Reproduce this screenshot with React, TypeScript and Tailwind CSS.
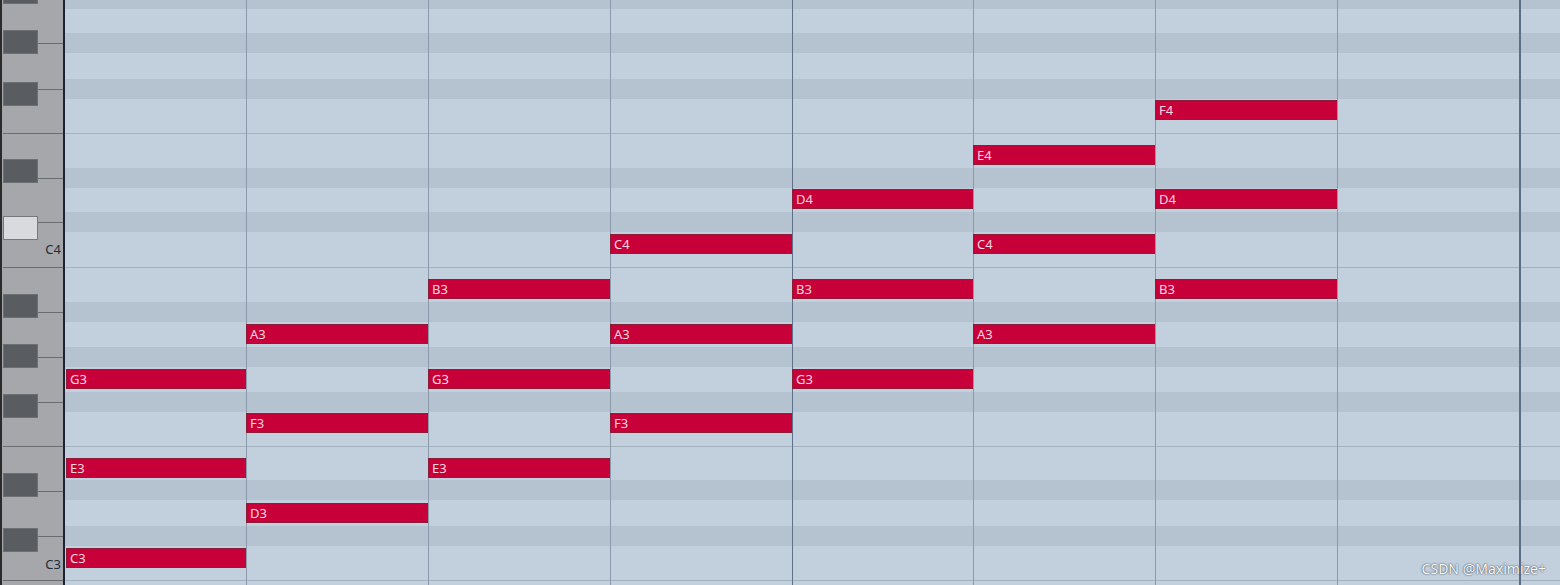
import React from "react";

const font = { fontFamily: '"Noto Sans", "Open Sans", sans-serif' };

// background rows, top to bottom (black key bands are the darker ones)
const stripes = [
  "h-[9px] bg-[#b5c3d0]",
  "h-[24px] bg-[#c2cfdc]",
  "h-[20px] bg-[#b5c3d0]",
  "h-[26px] bg-[#c2cfdc]",
  "h-[20px] bg-[#b5c3d0]",
  "h-[34px] bg-[#c2cfdc]",
  "h-px bg-[#a4b1be]",
  "h-[34px] bg-[#c2cfdc]",
  "h-[20px] bg-[#b5c3d0]",
  "h-[24px] bg-[#c2cfdc]",
  "h-[20px] bg-[#b5c3d0]",
  "h-[35px] bg-[#c2cfdc]",
  "h-px bg-[#a4b1be]",
  "h-[34px] bg-[#c2cfdc]",
  "h-[20px] bg-[#b5c3d0]",
  "h-[25px] bg-[#c2cfdc]",
  "h-[20px] bg-[#b5c3d0]",
  "h-[25px] bg-[#c2cfdc]",
  "h-[20px] bg-[#b5c3d0]",
  "h-[34px] bg-[#c2cfdc]",
  "h-px bg-[#a4b1be]",
  "h-[33px] bg-[#c2cfdc]",
  "h-[20px] bg-[#b5c3d0]",
  "h-[26px] bg-[#c2cfdc]",
  "h-[20px] bg-[#b5c3d0]",
  "h-[34px] bg-[#c2cfdc]",
  "h-px bg-[#a4b1be]",
  "h-[4px] bg-[#c2cfdc]",
];

const pitchTop: Record<string, string> = {
  C3: "top-[548px]",
  D3: "top-[503px]",
  E3: "top-[458px]",
  F3: "top-[413px]",
  G3: "top-[369px]",
  A3: "top-[324px]",
  B3: "top-[279px]",
  C4: "top-[234px]",
  D4: "top-[189px]",
  E4: "top-[145px]",
  F4: "top-[100px]",
};

const columns = [
  { w: "w-[181px]", line: "", notes: ["G3", "E3", "C3"] },
  { w: "w-[182px]", line: "border-l border-[#8b9aaa]", notes: ["A3", "F3", "D3"] },
  { w: "w-[182px]", line: "border-l border-[#8b9aaa]", notes: ["B3", "G3", "E3"] },
  { w: "w-[182px]", line: "border-l border-[#8b9aaa]", notes: ["C4", "A3", "F3"] },
  { w: "w-[181px]", line: "border-l border-[#5e7189]", notes: ["D4", "B3", "G3"] },
  { w: "w-[182px]", line: "border-l border-[#8b9aaa]", notes: ["E4", "C4", "A3"] },
  { w: "w-[182px]", line: "border-l border-[#8b9aaa]", notes: ["F4", "D4", "B3"] },
  { w: "w-[182px]", line: "border-l border-[#8b9aaa]", notes: [] },
  { w: "flex-1", line: "border-l-2 border-[#5b6e86]", notes: [] },
];

function BlackKey({ lineAt, light }: { lineAt: string; light?: boolean }) {
  return (
    <div className="flex h-[24px] items-start">
      <div
        className={
          light
            ? "ml-px h-full w-[35px] border border-[#76797c] bg-[#d8dadd]"
            : "ml-px h-full w-[35px] border border-[#6c7074] bg-[#595d61]"
        }
      />
      <div className={"h-px flex-1 bg-[#6a6d70] " + lineAt} />
    </div>
  );
}

function Keyboard() {
  return (
    <div
      className="flex h-[585px] w-[65px] shrink-0 flex-col border-l-2 border-r-2 border-l-[#2b2b2b] border-r-[#1c2134] bg-[#a5a7aa]"
      style={font}
    >
      <div className="flex h-[4px]">
        <div className="ml-px h-full w-[35px] border-x border-b border-[#6c7074] bg-[#595d61]" />
      </div>
      <div className="h-[26px]" />
      <BlackKey lineAt="mt-[13px]" />
      <div className="h-[28px]" />
      <BlackKey lineAt="mt-[7px]" />
      <div className="h-[27px]" />
      <div className="ml-px h-px bg-[#6a6d70]" />
      <div className="h-[25px]" />
      <BlackKey lineAt="mt-[19px]" />
      <div className="h-[33px]" />
      <BlackKey lineAt="mt-[6px]" light />
      <div className="flex h-[27px] justify-end pr-[2px] pt-[1px] text-[13px] leading-[16px] text-[#1f2c3c]">
        C4
      </div>
      <div className="ml-px h-px bg-[#6a6d70]" />
      <div className="h-[26px]" />
      <BlackKey lineAt="mt-[18px]" />
      <div className="h-[26px]" />
      <BlackKey lineAt="mt-[13px]" />
      <div className="h-[26px]" />
      <BlackKey lineAt="mt-[8px]" />
      <div className="h-[28px]" />
      <div className="ml-px h-px bg-[#6a6d70]" />
      <div className="h-[26px]" />
      <BlackKey lineAt="mt-[18px]" />
      <div className="h-[31px]" />
      <BlackKey lineAt="mt-[8px]" />
      <div className="flex h-[28px] justify-end pr-[2px] pt-[4px] text-[13px] leading-[16px] text-[#1f2c3c]">
        C3
      </div>
      <div className="ml-px h-px bg-[#6a6d70]" />
      <div className="h-[4px]" />
    </div>
  );
}

function Note({ name, first }: { name: string; first: boolean }) {
  return (
    <div
      className={
        "absolute right-0 flex h-[20px] items-center border border-r-0 border-[#8a1d37] bg-[#c8003a] pl-[3px] text-[13px] leading-none text-[#f8d6df] " +
        (first ? "left-px " : "-left-px ") +
        pitchTop[name]
      }
    >
      {name}
    </div>
  );
}

export default function App() {
  return (
    <div className="flex h-[585px] w-[1560px] overflow-hidden bg-[#c2cfdc]" style={font}>
      <Keyboard />
      <div className="relative flex flex-1 flex-col">
        {stripes.map((s, i) => (
          <div key={i} className={s} />
        ))}
        <div className="absolute inset-0 flex">
          {columns.map((c, i) => (
            <div key={i} className={"relative h-full shrink-0 " + c.w + " " + c.line}>
              {c.notes.map((n) => (
                <Note key={n} name={n} first={i === 0} />
              ))}
            </div>
          ))}
        </div>
        <div className="absolute bottom-[9px] right-[14px] text-[14px] leading-none text-[#f7f8fa] [text-shadow:0_0_2px_#4f5966,0_0_1px_#4f5966]">
          CSDN @Maximize+
        </div>
      </div>
    </div>
  );
}
